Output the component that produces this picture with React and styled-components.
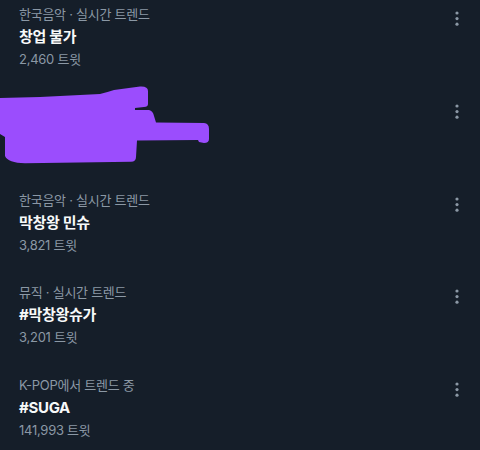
import React from "react";
import styled, { createGlobalStyle } from "styled-components";

const Global = createGlobalStyle`
  html, body { margin: 0; padding: 0; background: #151e29; }
  body { font-family: Inter, "Noto Sans CJK KR", sans-serif; }
`;

const List = styled.div`
  width: 480px;
  height: 450px;
  overflow: hidden;
  background: #151e29;
  padding-top: 4px;
  box-sizing: border-box;
`;

const Row = styled.div`
  position: relative;
  height: 92.8px;
  display: flex;
  justify-content: space-between;
  align-items: flex-start;
  padding: 0 20px 0 19px;
  box-sizing: border-box;
`;

const Texts = styled.div`
  display: flex;
  flex-direction: column;
`;

const Category = styled.div`
  font-size: 13px;
  line-height: 20px;
  color: #8b98a5;
  letter-spacing: -0.02em;
`;

const Title = styled.div`
  font-size: 15px;
  line-height: 26px;
  font-weight: 700;
  color: #f7f9f9;
  letter-spacing: -0.02em;
`;

const Count = styled.div`
  font-size: 13px;
  line-height: 18px;
  color: #8b98a5;
  letter-spacing: -0.02em;
`;

const More = styled.svg`
  flex: none;
  margin-top: 6px;
  display: block;
`;

const Scribble = styled.svg`
  position: absolute;
  left: 0;
  top: -13px;
`;

const MoreIcon = () => (
  <More width="6" height="18" viewBox="0 0 6 18">
    <circle cx="3" cy="3" r="1.6" fill="#8b98a5" />
    <circle cx="3" cy="8.6" r="1.6" fill="#8b98a5" />
    <circle cx="3" cy="14.2" r="1.6" fill="#8b98a5" />
  </More>
);

const trends = [
  { cat: "한국음악 · 실시간 트렌드", title: "창업 불가", count: "2,460 트윗" },
  null,
  { cat: "한국음악 · 실시간 트렌드", title: "막창왕 민슈", count: "3,821 트윗" },
  { cat: "뮤직 · 실시간 트렌드", title: "#막창왕슈가", count: "3,201 트윗" },
  { cat: "K-POP에서 트렌드 중", title: "#SUGA", count: "141,993 트윗" },
];

export default function App() {
  return (
    <>
      <Global />
      <List>
        {trends.map((t, i) => (
          <Row key={i}>
            {t ? (
              <Texts>
                <Category>{t.cat}</Category>
                <Title>{t.title}</Title>
                <Count>{t.count}</Count>
              </Texts>
            ) : (
              <>
                <Texts />
                <Scribble width="215" height="84" viewBox="0 84 215 84">
                  <path
                    fill="#9b4dfd"
                    d="M0,98 L40,97 L100,94 Q108,92 114,90 L140,86.5 Q148,86 148,91 L148,104 Q148,107 144,107 L135,108 L135,110 L149,110 Q153,111 154,116 L156,122.5 L204,123 Q209,123.5 209,129 L209,139 Q209,143 204,143 L199,142 L198,140 L137,140.5 L136,157 Q136,161.5 131,161.8 L25,163.2 Q8,163 5,156 L5,137 L0,134 Z"
                  />
                </Scribble>
              </>
            )}
            <MoreIcon />
          </Row>
        ))}
      </List>
    </>
  );
}
